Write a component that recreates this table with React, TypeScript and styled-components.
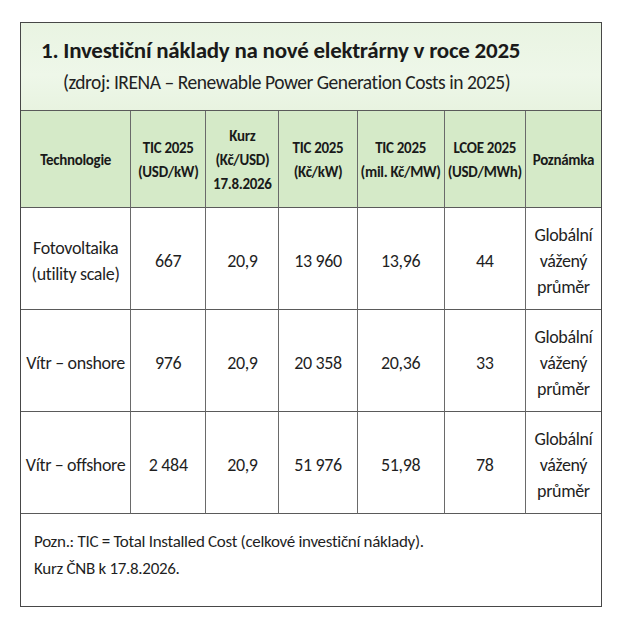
import React from 'react'
import styled, { createGlobalStyle } from 'styled-components'

const GlobalStyle = createGlobalStyle`
  html, body {
    margin: 0;
    padding: 0;
    background: #ffffff;
  }
  body {
    font-family: Carlito, Lato, sans-serif;
    color: #1f1f1f;
  }
`

const Page = styled.div`
  width: 622px;
  height: 622px;
  padding: 22px 20px 0 20px;
  box-sizing: border-box;
`

const Card = styled.div`
  width: 582px;
  box-sizing: border-box;
  border: 1.5px solid #474747;
  background: #ffffff;
`

const TitleBand = styled.div`
  height: 88px;
  box-sizing: border-box;
  padding: 12px 0 0 20px;
  background: linear-gradient(180deg, #e9f4e2 0%, #eef7e9 60%, #e8f3e0 100%);
  border-bottom: 1px solid #5a5a5a;
`

const Title = styled.h1`
  margin: 0;
  font-size: 23px;
  font-weight: 700;
  letter-spacing: -0.25px;
  line-height: 30px;
  color: #1a1a1a;
`

const Subtitle = styled.div`
  margin: 0 0 0 22px;
  font-size: 19.5px;
  letter-spacing: -0.45px;
  line-height: 34px;
  color: #222222;
`

const Table = styled.table`
  width: 100%;
  table-layout: fixed;
  border-collapse: separate;
  border-spacing: 0;
`

const Col = styled.col<{ $w: number }>`
  width: ${p => p.$w}px;
`

const HeadRow = styled.tr`
  height: 97px;
  background: #d5eac8;
`

const HeadCell = styled.th`
  padding: 2px 1px 0 1px;
  font-size: 15px;
  font-weight: 700;
  letter-spacing: -0.3px;
  line-height: 24px;
  text-align: center;
  vertical-align: middle;
  color: #1a1a1a;
  border-bottom: 1px solid #5a5a5a;
  & + & {
    border-left: 1px solid #6a6a6a;
  }
`

const Row = styled.tr`
  height: 102px;
`

const Cell = styled.td`
  padding: 4px 1px 0 1px;
  font-size: 18px;
  letter-spacing: -0.35px;
  line-height: 26px;
  text-align: center;
  vertical-align: middle;
  color: #1f1f1f;
  border-bottom: 1px solid #5a5a5a;
  & + & {
    border-left: 1px solid #6a6a6a;
  }
`

const Footnote = styled.div`
  height: 92px;
  box-sizing: border-box;
  padding: 14px 0 0 13px;
  font-size: 17px;
  letter-spacing: -0.3px;
  line-height: 27px;
  color: #1f1f1f;
`

const widths = [109, 75, 73, 78, 87, 81, 76]

const headers: string[][] = [
  ['Technologie'],
  ['TIC 2025', '(USD/kW)'],
  ['Kurz', '(Kč/USD)', '17.8.2026'],
  ['TIC 2025', '(Kč/kW)'],
  ['TIC 2025', '(mil. Kč/MW)'],
  ['LCOE 2025', '(USD/MWh)'],
  ['Poznámka']
]

const note = ['Globální', 'vážený', 'průměr']

const rows: string[][][] = [
  [['Fotovoltaika', '(utility scale)'], ['667'], ['20,9'], ['13 960'], ['13,96'], ['44'], note],
  [['Vítr – onshore'], ['976'], ['20,9'], ['20 358'], ['20,36'], ['33'], note],
  [['Vítr – offshore'], ['2 484'], ['20,9'], ['51 976'], ['51,98'], ['78'], note]
]

function Lines ({ lines }: { lines: string[] }) {
  return (
    <>
      {lines.map((l, i) => (
        <React.Fragment key={i}>
          {i > 0 && <br />}
          {l}
        </React.Fragment>
      ))}
    </>
  )
}

export default function App () {
  return (
    <>
      <GlobalStyle />
      <Page>
        <Card>
          <TitleBand>
            <Title>1. Investiční náklady na nové elektrárny v roce 2025</Title>
            <Subtitle>(zdroj: IRENA – Renewable Power Generation Costs in 2025)</Subtitle>
          </TitleBand>
          <Table>
            <colgroup>
              {widths.map((w, i) => <Col key={i} $w={w} />)}
            </colgroup>
            <thead>
              <HeadRow>
                {headers.map((h, i) => (
                  <HeadCell key={i}><Lines lines={h} /></HeadCell>
                ))}
              </HeadRow>
            </thead>
            <tbody>
              {rows.map((r, i) => (
                <Row key={i}>
                  {r.map((c, j) => (
                    <Cell key={j}><Lines lines={c} /></Cell>
                  ))}
                </Row>
              ))}
            </tbody>
          </Table>
          <Footnote>
            Pozn.: TIC = Total Installed Cost (celkové investiční náklady).<br />
            Kurz ČNB k 17.8.2026.
          </Footnote>
        </Card>
      </Page>
    </>
  )
}
